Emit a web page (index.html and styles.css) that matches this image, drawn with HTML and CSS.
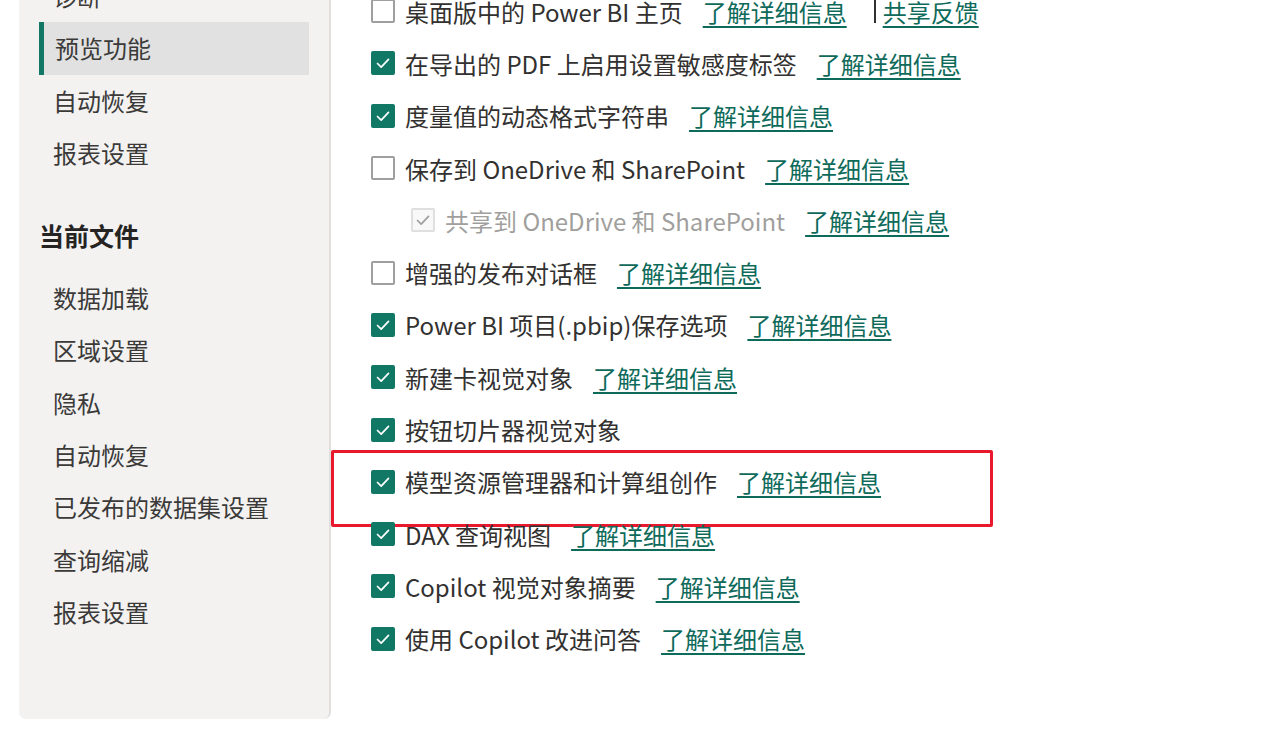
FILE: index.html
```html
<!DOCTYPE html>
<html lang="zh-CN">
<head>
<meta charset="utf-8">
<title>选项 - 预览功能</title>
<link rel="stylesheet" href="styles.css">
</head>
<body>
<div class="page">
  <nav class="sidebar">
    <div class="nav-item">诊断</div>
    <div class="nav-item selected">预览功能</div>
    <div class="nav-item">自动恢复</div>
    <div class="nav-item">报表设置</div>
    <div class="nav-heading">当前文件</div>
    <div class="nav-item">数据加载</div>
    <div class="nav-item">区域设置</div>
    <div class="nav-item">隐私</div>
    <div class="nav-item">自动恢复</div>
    <div class="nav-item">已发布的数据集设置</div>
    <div class="nav-item">查询缩减</div>
    <div class="nav-item">报表设置</div>
  </nav>
  <main class="content">
    <div class="row">
      <span class="cb"></span>
      <span class="label">桌面版中的 Power BI 主页</span>
      <a class="link">了解详细信息</a>
      <span class="sep"></span>
      <a class="link link-tight">共享反馈</a>
    </div>
    <div class="row">
      <span class="cb checked"><svg viewBox="0 0 24 24"><path d="M6.5 12.5 L10.2 16.2 L17.5 8.3"/></svg></span>
      <span class="label">在导出的 PDF 上启用设置敏感度标签</span>
      <a class="link">了解详细信息</a>
    </div>
    <div class="row">
      <span class="cb checked"><svg viewBox="0 0 24 24"><path d="M6.5 12.5 L10.2 16.2 L17.5 8.3"/></svg></span>
      <span class="label">度量值的动态格式字符串</span>
      <a class="link">了解详细信息</a>
    </div>
    <div class="row">
      <span class="cb"></span>
      <span class="label">保存到 OneDrive 和 SharePoint</span>
      <a class="link">了解详细信息</a>
    </div>
    <div class="row indent">
      <span class="cb disabled"><svg viewBox="0 0 24 24"><path d="M6.5 12.5 L10.2 16.2 L17.5 8.3"/></svg></span>
      <span class="label muted">共享到 OneDrive 和 SharePoint</span>
      <a class="link">了解详细信息</a>
    </div>
    <div class="row">
      <span class="cb"></span>
      <span class="label">增强的发布对话框</span>
      <a class="link">了解详细信息</a>
    </div>
    <div class="row">
      <span class="cb checked"><svg viewBox="0 0 24 24"><path d="M6.5 12.5 L10.2 16.2 L17.5 8.3"/></svg></span>
      <span class="label">Power BI 项目(.pbip)保存选项</span>
      <a class="link">了解详细信息</a>
    </div>
    <div class="row">
      <span class="cb checked"><svg viewBox="0 0 24 24"><path d="M6.5 12.5 L10.2 16.2 L17.5 8.3"/></svg></span>
      <span class="label">新建卡视觉对象</span>
      <a class="link">了解详细信息</a>
    </div>
    <div class="row">
      <span class="cb checked"><svg viewBox="0 0 24 24"><path d="M6.5 12.5 L10.2 16.2 L17.5 8.3"/></svg></span>
      <span class="label">按钮切片器视觉对象</span>
    </div>
    <div class="row highlighted">
      <span class="cb checked"><svg viewBox="0 0 24 24"><path d="M6.5 12.5 L10.2 16.2 L17.5 8.3"/></svg></span>
      <span class="label">模型资源管理器和计算组创作</span>
      <a class="link">了解详细信息</a>
      <span class="highlight-box"></span>
    </div>
    <div class="row">
      <span class="cb checked"><svg viewBox="0 0 24 24"><path d="M6.5 12.5 L10.2 16.2 L17.5 8.3"/></svg></span>
      <span class="label">DAX 查询视图</span>
      <a class="link">了解详细信息</a>
    </div>
    <div class="row">
      <span class="cb checked"><svg viewBox="0 0 24 24"><path d="M6.5 12.5 L10.2 16.2 L17.5 8.3"/></svg></span>
      <span class="label">Copilot 视觉对象摘要</span>
      <a class="link">了解详细信息</a>
    </div>
    <div class="row">
      <span class="cb checked"><svg viewBox="0 0 24 24"><path d="M6.5 12.5 L10.2 16.2 L17.5 8.3"/></svg></span>
      <span class="label">使用 Copilot 改进问答</span>
      <a class="link">了解详细信息</a>
    </div>
  </main>
</div>
</body>
</html>
```

FILE: styles.css
```css
* {
  box-sizing: border-box;
}

html, body {
  margin: 0;
  padding: 0;
  background: #ffffff;
  overflow: hidden;
}

body {
  font-family: "Segoe UI", "Noto Sans CJK SC", "Noto Sans", sans-serif;
  color: #323130;
  font-size: 24px;
}

.page {
  display: flex;
  align-items: flex-start;
  margin-top: -30px;
}

.sidebar {
  margin-left: 19px;
  width: 312px;
  flex: none;
  background: #f3f2f1;
  border-right: 2px solid #e1dfdd;
  border-radius: 0 0 7px 7px;
  padding: 0 20px 81px 20px;
  display: flex;
  flex-direction: column;
}

.nav-item {
  height: 52.3px;
  line-height: 52px;
  padding-left: 14px;
  font-size: 24px;
  color: #3b3a39;
  white-space: nowrap;
}

.nav-item.selected {
  background: #e1e1e1;
  border-left: 5px solid #117865;
  padding-left: 11px;
}

.nav-heading {
  margin-top: 40px;
  margin-bottom: 19px;
  height: 34px;
  line-height: 33px;
  font-size: 25px;
  font-weight: 700;
  color: #252423;
}

.content {
  margin-left: 40px;
  padding-top: 15px;
  display: flex;
  flex-direction: column;
}

.row {
  position: relative;
  display: flex;
  align-items: center;
  height: 52.3px;
  white-space: nowrap;
}

.row.indent {
  padding-left: 40px;
}

.cb {
  width: 24px;
  height: 24px;
  flex: none;
  border: 2px solid #a19f9d;
  border-radius: 2px;
  background: #ffffff;
  margin-right: 10px;
  display: flex;
  align-items: center;
  justify-content: center;
}

.cb svg {
  width: 24px;
  height: 24px;
  flex: none;
}

.cb svg path {
  fill: none;
  stroke: #ffffff;
  stroke-width: 1.7;
  stroke-linecap: round;
  stroke-linejoin: round;
}

.cb.checked {
  background: #117865;
  border-color: #117865;
}

.cb.disabled {
  background: #f8f8f8;
  border: 2px solid #e1dfdd;
}

.cb.disabled svg path {
  stroke: #a19f9d;
}

.label {
  color: #323130;
}

.label.muted {
  color: #a19f9d;
}

.link {
  margin-left: 20px;
  color: #0e6a5a;
  text-decoration: underline;
  text-decoration-thickness: 2px;
  text-underline-offset: 4px;
  cursor: pointer;
}

.link.link-tight {
  margin-left: 7px;
}

.sep {
  width: 2px;
  height: 24px;
  background: #323130;
  margin-left: 27px;
}

.highlight-box {
  position: absolute;
  left: -40px;
  top: -6px;
  width: 662px;
  height: 77px;
  border: 3px solid #e8192c;
  border-radius: 2px;
  pointer-events: none;
}
```
